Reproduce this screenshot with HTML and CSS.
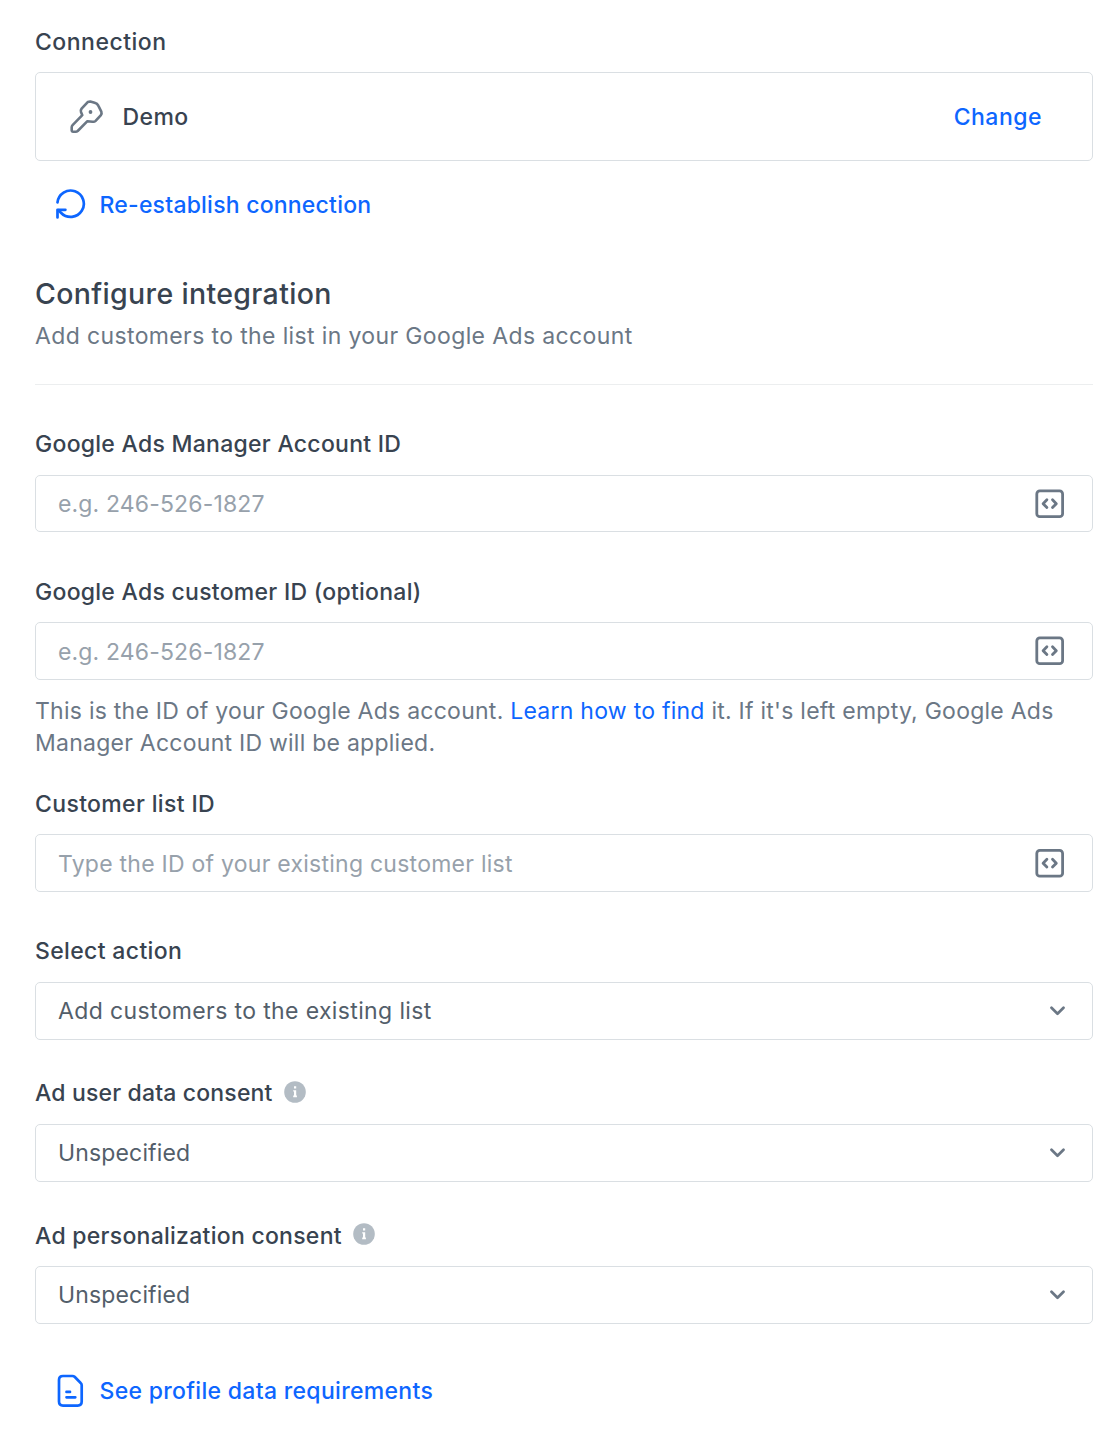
FILE: index.html
```html
<!DOCTYPE html>
<html lang="en">
<head>
    <meta charset="UTF-8">
    <meta name="viewport" content="width=device-width, initial-scale=1.0">
    <title>Configure integration</title>
    <link rel="stylesheet" href="styles.css">
</head>
<body>

    <!-- Connection -->
    <section class="connection">
        <h2 class="label">Connection</h2>
        <div class="connection-card">
            <svg class="key-icon" width="36" height="36" viewBox="0 0 36 36">
                <path d="M18.7 3.1 L21.3 2.5 L25.6 3.7 Q28.3 4.4 29.3 6.6 L32.3 12.6 Q33.1 14.6 31.7 16.4 L26.6 21.9 Q25.3 23.1 23.5 22.7 L18.4 22.2 L8.7 32 Q7.8 32.7 6.7 32.7 L3.8 32.7 Q2.7 32.7 2.7 31.6 L2.7 28.3 Q2.7 27 3.6 26.1 L13.3 16.2 L12 13 Q11.4 11.2 12.6 9.6 Z"/>
                <circle cx="21.5" cy="13" r="1.9"/>
            </svg>
            <span class="connection-name">Demo</span>
            <a class="link change" href="#">Change</a>
        </div>
        <a class="link action-link" href="#">
            <svg class="action-icon" width="32" height="32" viewBox="0 0 32 32">
                <path d="M2.5 13.3 A13.2 13.2 0 1 1 6.2 24 L3.2 21.1"/>
                <path d="M2.5 28.4 V20.8 H10.4"/>
            </svg>
            <span class="reconnect">Re-establish connection</span>
        </a>
    </section>

    <!-- Integration header -->
    <header class="config-header">
        <h1>Configure integration</h1>
        <p>Add customers to the list in your Google Ads account</p>
    </header>

    <!-- Integration form -->
    <form>
        <div class="field">
            <label class="label" for="manager-id">Google Ads Manager Account ID</label>
            <div class="control">
                <input type="text" id="manager-id" placeholder="e.g. 246-526-1827">
                <svg class="code-icon" width="30" height="30" viewBox="0 0 30 30">
                    <rect x="1.8" y="1.9" width="25.8" height="25.8" rx="3"/>
                    <path d="M11.9 10.8 L8.1 14.7 L11.9 18.6 M17.5 10.8 L21.3 14.7 L17.5 18.6"/>
                </svg>
            </div>
        </div>

        <div class="field">
            <label class="label" for="customer-id">Google Ads customer ID (optional)</label>
            <div class="control lower">
                <input type="text" id="customer-id" placeholder="e.g. 246-526-1827">
                <svg class="code-icon" width="30" height="30" viewBox="0 0 30 30">
                    <rect x="1.8" y="1.9" width="25.8" height="25.8" rx="3"/>
                    <path d="M11.9 10.8 L8.1 14.7 L11.9 18.6 M17.5 10.8 L21.3 14.7 L17.5 18.6"/>
                </svg>
            </div>
            <p class="help">This is the ID of your Google Ads account. <a href="#">Learn how to find</a> it. If it's left empty, Google Ads<br>Manager Account ID will be applied.</p>
        </div>

        <div class="field">
            <label class="label short" for="list-id">Customer list ID</label>
            <div class="control lower">
                <input class="list-input" type="text" id="list-id" placeholder="Type the ID of your existing customer list">
                <svg class="code-icon" width="30" height="30" viewBox="0 0 30 30">
                    <rect x="1.8" y="2.4" width="25.8" height="25.8" rx="3"/>
                    <path d="M11.9 11.3 L8.1 15.2 L11.9 19.1 M17.5 11.3 L21.3 15.2 L17.5 19.1"/>
                </svg>
            </div>
        </div>

        <div class="field tight">
            <div class="label short">Select action</div>
            <div class="control select">
                <span class="action-value">Add customers to the existing list</span>
                <svg class="chevron" width="16" height="10" viewBox="0 0 16 10">
                    <path d="M2.5 1.8 L8.5 7.8 L14.5 1.8"/>
                </svg>
            </div>
        </div>

        <div class="field tight">
            <div class="label user-data">
                <span>Ad user data consent</span>
                <svg class="info-icon" width="22" height="22" viewBox="0 0 22 22">
                    <circle cx="11" cy="11" r="10.8"/>
                    <path d="M10 5.2 H12.2 V7.4 H10 Z M9.2 9.2 H12.2 V14.6 H12.9 V16.2 H9.2 V14.6 H10 V10.6 H9.2 Z"/>
                </svg>
            </div>
            <div class="control select">
                <span>Unspecified</span>
                <svg class="chevron" width="16" height="10" viewBox="0 0 16 10">
                    <path d="M2.5 1.8 L8.5 7.8 L14.5 1.8"/>
                </svg>
            </div>
        </div>

        <div class="field tight">
            <div class="label personalization">
                <span>Ad personalization consent</span>
                <svg class="info-icon" width="22" height="22" viewBox="0 0 22 22">
                    <circle cx="11" cy="11" r="10.8"/>
                    <path d="M10 5.2 H12.2 V7.4 H10 Z M9.2 9.2 H12.2 V14.6 H12.9 V16.2 H9.2 V14.6 H10 V10.6 H9.2 Z"/>
                </svg>
            </div>
            <div class="control select">
                <span>Unspecified</span>
                <svg class="chevron" width="16" height="10" viewBox="0 0 16 10">
                    <path d="M2.5 1.8 L8.5 7.8 L14.5 1.8"/>
                </svg>
            </div>
        </div>
    </form>

    <a class="link action-link requirements" href="#">
        <svg class="action-icon" width="32" height="34" viewBox="0 0 32 34">
            <path d="M8 2 H17.5 Q18.7 2 19.6 2.8 L25.7 9 Q26.7 9.9 26.7 11.3 V27.6 Q26.7 31.6 22.7 31.6 H8 Q4 31.6 4 27.6 V6 Q4 2 8 2 Z"/>
            <path d="M11.5 17.9 H15 M11.5 23.3 H20.3"/>
        </svg>
        <span>See profile data requirements</span>
    </a>

</body>
</html>
```
FILE: styles.css
```css
/* General Styles */
* {
    box-sizing: border-box;
}

body {
    font-family: Inter, 'Liberation Sans', sans-serif;
    font-size: 23px;
    line-height: 32px;
    margin: 0;
    padding: 26px 9px 0 35px;
    background: #fff;
    color: #384350;
}

a {
    color: #0d66ff;
    text-decoration: none;
}

svg {
    display: block;
    flex: none;
    fill: none;
    stroke-linecap: round;
    stroke-linejoin: round;
}

.label {
    display: flex;
    align-items: center;
    height: 32px;
    margin: 0 0 14.5px;
    font-size: 23px;
    font-weight: 500;
    letter-spacing: 0.27px;
    white-space: nowrap;
}

.label.short {
    letter-spacing: 0.35px;
}

.link {
    font-weight: 500;
    letter-spacing: 0.31px;
}

/* Connection */
.connection .label {
    margin-bottom: 14px;
    letter-spacing: 0.5px;
}

.connection-card {
    display: flex;
    align-items: center;
    height: 89px;
    padding: 0 50px 0 33px;
    border: 1px solid #dadfe3;
    border-radius: 5px;
}

.key-icon {
    stroke: #6b7785;
    stroke-width: 2.6;
}

.key-icon circle {
    fill: #6b7785;
    stroke: none;
}

.connection-name {
    margin-left: 17.5px;
    font-weight: 500;
    letter-spacing: 0.4px;
}

.change {
    margin-left: auto;
    letter-spacing: 0.5px;
}

.action-link {
    display: flex;
    align-items: center;
    height: 34px;
    margin-top: 27px;
    padding-left: 20px;
}

.action-icon {
    margin-right: 12.5px;
    stroke: #0d66ff;
    stroke-width: 2.7;
}

.reconnect {
    letter-spacing: 0.22px;
}

/* Integration header */
.config-header {
    margin-bottom: 43.3px;
    padding: 52px 0 32px;
    border-bottom: 1px solid #eceeef;
    white-space: nowrap;
}

.config-header h1 {
    margin: 0;
    font-size: 28.5px;
    font-weight: 500;
    line-height: 40px;
    letter-spacing: 0.35px;
}

.config-header p {
    margin: 6px 0 0;
    color: #6b7785;
    letter-spacing: 0.37px;
}

/* Form Fields */
.field {
    margin-bottom: 43.4px;
}

.field:nth-child(2) {
    margin-bottom: 28.8px;
}

.field.tight {
    margin-bottom: 37.5px;
}

.control {
    display: flex;
    align-items: center;
    height: 57.6px;
    padding: 0 27px 0 22px;
    border: 1px solid #dadfe3;
    border-radius: 5px;
    letter-spacing: 0.15px;
}

.control input {
    flex: 1;
    height: 32px;
    padding: 0;
    border: none;
    outline: none;
    background: none;
    color: #535e6a;
    font: inherit;
    letter-spacing: inherit;
}

.control input::placeholder {
    color: #97a1ab;
}

.control.lower input {
    margin-top: 1.5px;
}

.control .list-input {
    letter-spacing: 0.25px;
}

.code-icon {
    stroke: #6b7785;
    stroke-width: 2.8;
}

.select {
    height: 58px;
    justify-content: space-between;
    color: #535e6a;
}

.action-value {
    letter-spacing: 0.37px;
}

.chevron {
    stroke: #6b7785;
    stroke-width: 2.7;
}

.info-icon {
    margin-left: 11.5px;
    margin-top: -3px;
}

.user-data {
    letter-spacing: 0.17px;
}

.personalization span {
    padding-top: 1px;
}

.info-icon circle {
    fill: #b3bcc4;
}

.info-icon path {
    fill: #fff;
}

.help {
    margin: 15.2px 0 0;
    color: #6b7785;
    letter-spacing: 0.25px;
    white-space: nowrap;
}

.requirements {
    margin-top: 50px;
}
```
